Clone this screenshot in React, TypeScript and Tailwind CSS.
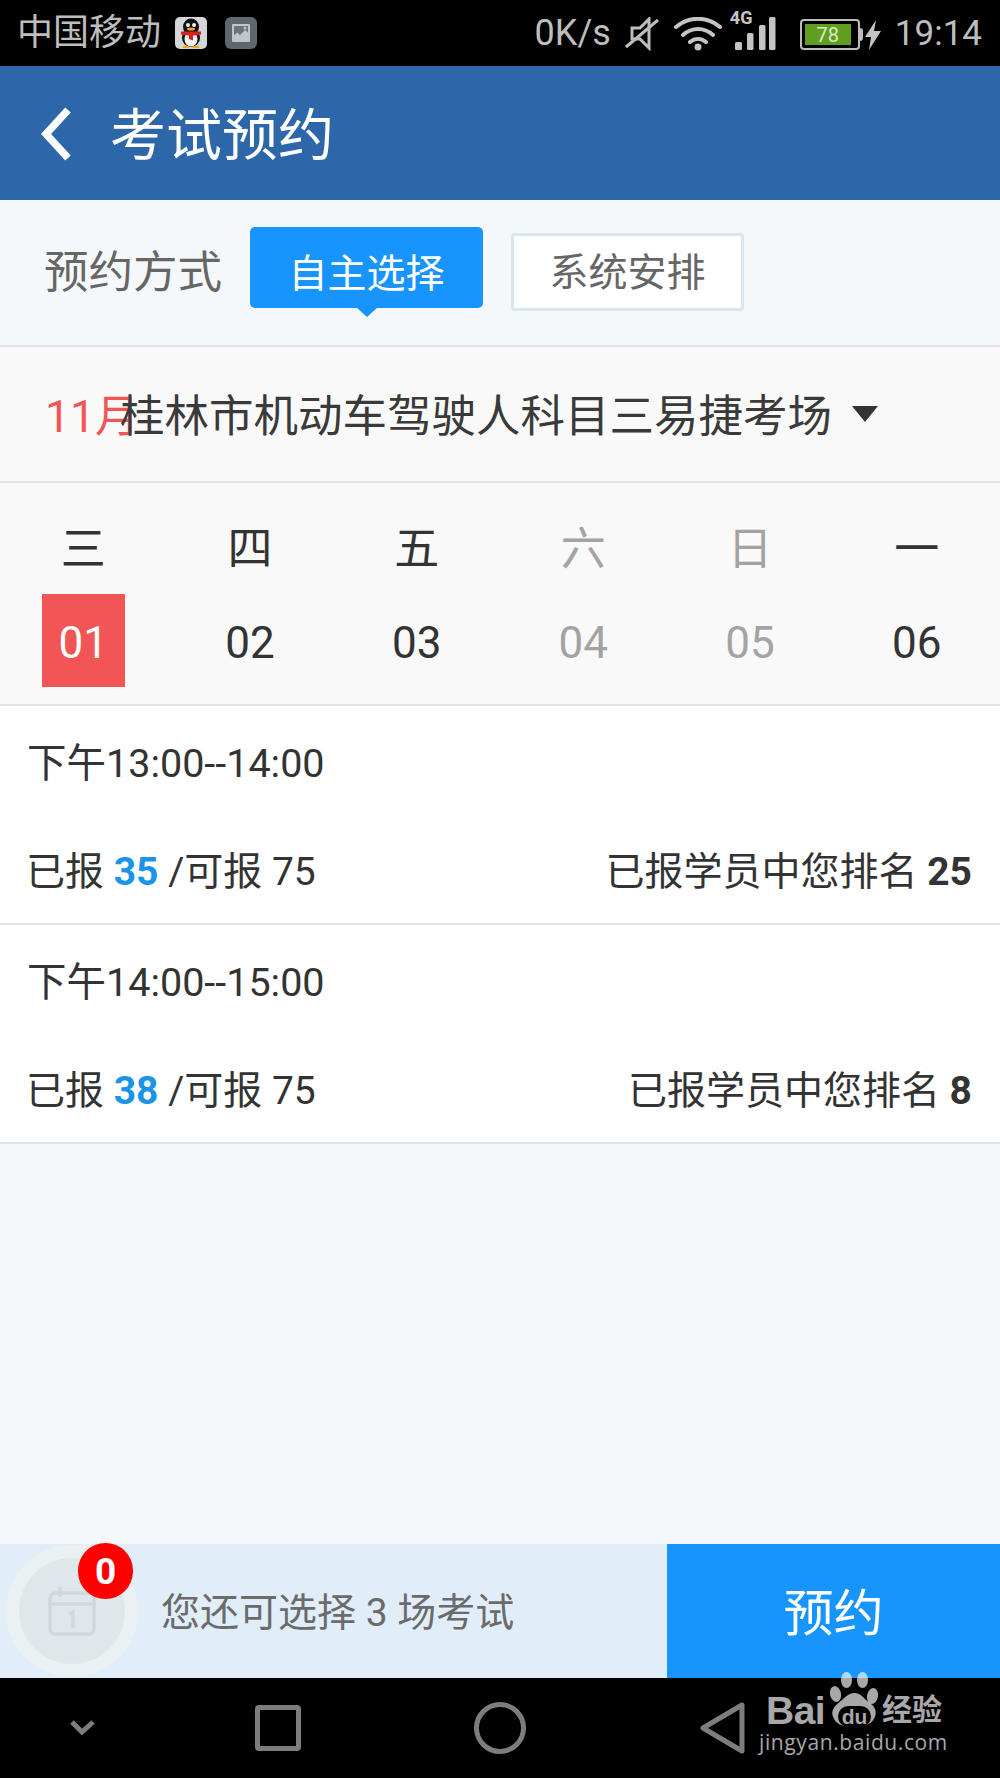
const days = [
  { week: "三", day: "01", active: true },
  { week: "四", day: "02" },
  { week: "五", day: "03" },
  { week: "六", day: "04", off: true },
  { week: "日", day: "05", off: true },
  { week: "一", day: "06" },
];

const slots = [
  { time: "下午13:00--14:00", booked: 35, rank: 25 },
  { time: "下午14:00--15:00", booked: 38, rank: 8 },
];

function QQIcon() {
  return (
    <svg width="32" height="32" viewBox="0 0 32 32">
      <rect width="32" height="32" rx="5" fill="#d6d6d6" />
      <ellipse cx="16" cy="21" rx="9" ry="9" fill="#111" />
      <ellipse cx="16" cy="22" rx="6.5" ry="7.5" fill="#f2f2f2" />
      <ellipse cx="16" cy="10" rx="8" ry="8.5" fill="#111" />
      <circle cx="13" cy="8" r="2" fill="#eee" />
      <circle cx="19" cy="8" r="2" fill="#eee" />
      <ellipse cx="16" cy="12" rx="4" ry="1.6" fill="#f0a818" />
      <path d="M6 14.5h20v3l-8 1v5l-4-1.5v-3.5l-8-1z" fill="#d8201e" />
      <ellipse cx="11" cy="30" rx="3.5" ry="1.2" fill="#f0a818" />
      <ellipse cx="21" cy="30" rx="3.5" ry="1.2" fill="#f0a818" />
    </svg>
  );
}

function PictureIcon() {
  return (
    <svg width="32" height="32" viewBox="0 0 32 32">
      <rect width="32" height="32" rx="6" fill="#5f686f" />
      <rect x="7" y="7" width="18" height="18" rx="1" fill="#c2c5c7" />
      <path d="M9 9h14v6.5L20 13l-5 5-2.5-2.5L9 18z" fill="#6b747a" />
      <circle cx="20" cy="11" r="1.5" fill="#c2c5c7" />
    </svg>
  );
}

function StatusIcons() {
  return (
    <div className="flex items-center">
      <svg width="34" height="34" viewBox="0 0 34 34" className="ml-[14px] mt-[2px]">
        <path d="M7 11h8l9-9v29l-9-9H7z" fill="none" stroke="#bdbdbd" strokeWidth="3" />
        <path d="M1 30 33 3" stroke="#bdbdbd" strokeWidth="3" />
      </svg>
      <svg width="48" height="34" viewBox="0 0 48 34" className="ml-[15px] mt-[1px]">
        <path d="M2 10c13-11 31-11 44 0M9 18c9-8 21-8 30 0M16 25c5-4 11-4 16 0" fill="none" stroke="#c4c4c4" strokeWidth="4" strokeLinecap="round" />
        <circle cx="24" cy="30" r="3.5" fill="#c4c4c4" />
      </svg>
      <div className="relative ml-[8px] mt-[-4px] h-[38px] w-[46px]">
        <span className="absolute left-0 top-[-3px] text-[18px] font-bold leading-[18px] text-[#c4c4c4]">4G</span>
        <svg width="46" height="38" viewBox="0 0 46 38" className="absolute inset-0">
          <rect x="5" y="30" width="7" height="8" rx="1.5" fill="#c4c4c4" />
          <rect x="17" y="21" width="6.5" height="17" rx="1.5" fill="#c4c4c4" />
          <rect x="29" y="13" width="6.5" height="25" rx="1.5" fill="#c4c4c4" />
          <rect x="39" y="5" width="6.5" height="33" rx="1.5" fill="#c4c4c4" />
        </svg>
      </div>
      <div className="ml-[24px] mt-[3px] flex items-center">
        <div className="flex h-[31px] w-[60px] items-center rounded-[4px] border-2 border-[#bdbdbd] p-[3px]">
          <div className="flex h-full w-[46px] items-center justify-center bg-[#5f9e1f] text-[20px] leading-none text-[#dcebc8]">78</div>
        </div>
        <div className="h-[13px] w-[3px] rounded-r-sm bg-[#bdbdbd]" />
      </div>
      <svg width="16" height="30" viewBox="0 0 16 30" className="ml-[2px] mt-[4px]">
        <path d="M11 0 0 17h6L4 30 16 11H9z" fill="#c4c4c4" />
      </svg>
    </div>
  );
}

function BaiduMark() {
  return (
    <div className="absolute left-[765px] top-[1671px] h-[90px] w-[225px] text-[#a8a8a8]">
      <svg width="55" height="57" viewBox="0 0 52 57" className="absolute left-[61px] top-0">
        <g fill="#ffffff" fillOpacity="0.66">
          <ellipse cx="19" cy="9" rx="5.5" ry="8" />
          <ellipse cx="35" cy="9" rx="5.5" ry="8" />
          <ellipse cx="8" cy="23" rx="5.5" ry="8" transform="rotate(-12 8 23)" />
          <ellipse cx="45" cy="25" rx="5.5" ry="8" transform="rotate(10 45 25)" />
          <path d="M27 22c6 0 9 5 14 9 6 4 8 8 7 13-2 8-9 12-21 12s-20-3-22-12c-1-5 2-9 7-13 5-4 9-9 15-9z" />
        </g>
      </svg>
      <span className="absolute left-[1px] top-[18px] text-[39px] font-bold leading-[44px] tracking-[-0.5px] [font-family:'Liberation_Sans',sans-serif]">Bai</span>
      <span className="absolute left-[73px] top-[35px] flex h-[21px] w-[33px] items-center justify-center rounded-full bg-black text-[21px] font-bold leading-none text-[#a8a8a8] [font-family:'Liberation_Sans',sans-serif]">du</span>
      <span className="absolute left-[117px] top-[18px] text-[30px] font-bold leading-[36px] [font-family:'Noto_Sans_CJK_SC',sans-serif]">经验</span>
      <span className="absolute left-[-6px] top-[58px] text-[21px] leading-[26px] tracking-[0.6px] [font-family:'Open_Sans',sans-serif]">jingyan.baidu.com</span>
    </div>
  );
}

export default function App() {
  return (
    <div className="relative flex h-[1778px] w-[1000px] flex-col overflow-hidden bg-[#f4f8fa] [font-family:Roboto,'Noto_Sans_CJK_SC',sans-serif]">
      <div className="flex h-[66px] items-center justify-between bg-black pl-[17px] pr-[18px] text-[#bdbdbd]">
        <div className="flex items-center">
          <span className="text-[36px] leading-none">中国移动</span>
          <span className="ml-[14px] flex"><QQIcon /></span>
          <span className="ml-[18px] flex"><PictureIcon /></span>
        </div>
        <div className="flex items-center">
          <span className="text-[36px] leading-none">0K/s</span>
          <StatusIcons />
          <span className="ml-[14px] text-[35px] leading-none">19:14</span>
        </div>
      </div>

      <header className="flex h-[134px] items-center bg-[#2d67aa] pl-[41px] text-white">
        <svg width="32" height="54" viewBox="0 0 32 54" className="mt-[2px]">
          <path d="M27 3 5 27l22 24" fill="none" stroke="#fff" strokeWidth="7.5" />
        </svg>
        <h1 className="ml-[37px] mt-[6px] text-[56px] font-normal leading-none">考试预约</h1>
      </header>

      <div className="flex h-[147px] items-start border-b-2 border-[#e2e4e4] bg-[#f4f8fa] pl-[44px]">
        <span className="mt-[48px] w-[178px] whitespace-nowrap text-[44.5px] leading-[50px] text-[#666]">预约方式</span>
        <div className="relative ml-[28px] mt-[27px] flex h-[81px] w-[233px] items-center justify-center rounded-[5px] bg-[#1894ff] pt-[13px] text-[39px] text-white">
          自主选择
          <span className="absolute bottom-[-9px] left-1/2 h-0 w-0 -translate-x-1/2 border-x-[11px] border-t-[10px] border-x-transparent border-t-[#1894ff]" />
        </div>
        <div className="ml-[28px] mt-[33px] flex h-[78px] w-[233px] items-center justify-center rounded-[4px] border-[3px] border-[#d8e6f0] bg-white pt-[2px] text-[39px] text-[#666]">
          系统安排
        </div>
      </div>

      <div className="flex h-[136px] items-center border-b-2 border-[#e2e4e4] bg-[#f9f9f9] pl-[45px] pt-[6px]">
        <span className="mr-[-8px] w-[83px] shrink-0 whitespace-nowrap text-[44.5px] text-[#f25555]">11月</span>
        <span className="whitespace-nowrap text-[44.5px] text-[#3a3a3a]">桂林市机动车驾驶人科目三易捷考场</span>
        <span className="ml-[20px] mt-[-6px] h-0 w-0 border-x-[13px] border-t-[16px] border-x-transparent border-t-[#333]" />
      </div>

      <div className="grid h-[223px] grid-cols-6 border-b-2 border-[#e2e4e4] bg-[#f9f9f9]">
        {days.map((d) => (
          <div key={d.day} className="flex flex-col items-center">
            <span className={`mt-[37px] text-[45px] leading-[60px] ${d.off ? "text-[#a3a3a3]" : "text-[#333]"}`}>{d.week}</span>
            <span
              className={`mt-[14px] flex h-[93px] w-[83px] items-center justify-center pt-[4px] text-[44px] ${
                d.active ? "bg-[#f25555] text-white" : d.off ? "text-[#a3a3a3]" : "text-[#333]"
              }`}
            >
              {d.day}
            </span>
          </div>
        ))}
      </div>

      {slots.map((s) => (
        <div key={s.time} className="flex h-[219px] flex-col border-b-2 border-[#e2e4e4] bg-white pl-[26px] pr-[28px] text-[39px] text-[#333]">
          <div className="ml-[1px] mt-[34px] text-[39.5px] leading-[48px]">{s.time}</div>
          <div className="mt-[60px] flex items-center justify-between leading-[48px]">
            <span>
              已报 <b className="font-bold text-[#1a94e8]">{s.booked}</b> /可报 75
            </span>
            <span>
              已报学员中您排名 <b className="font-bold">{s.rank}</b>
            </span>
          </div>
        </div>
      ))}

      <div className="flex-1" />

      <div className="flex h-[134px] bg-[#e1eefa]">
        <div className="flex flex-1 items-center pl-[6px]">
          <div className="relative flex h-[132px] w-[132px] shrink-0 items-center justify-center rounded-full bg-[#ebf0f2]">
            <div className="flex h-[106px] w-[106px] items-center justify-center rounded-full bg-[#e0e7ea]">
              <svg width="50" height="52" viewBox="0 0 50 52" fill="none" stroke="#cfd9dc" strokeWidth="3.5">
                <rect x="3" y="8" width="44" height="41" rx="5" />
                <path d="M3 19h44M13 2v10" />
                <path d="M22 29l4-2v16" />
              </svg>
            </div>
            <span className="absolute left-[72px] top-[-2px] flex h-[56px] w-[55px] items-center justify-center rounded-full bg-[#ff0000] text-[37px] font-bold leading-none text-white">0</span>
          </div>
          <span className="ml-[23px] pt-[5px] text-[39px] text-[#6b6b6b]">您还可选择 3 场考试</span>
        </div>
        <div className="flex w-[333px] items-center justify-center bg-[#1894ff] pt-[6px] text-[50px] text-white">预约</div>
      </div>

      <nav className="flex h-[100px] items-center bg-black">
        <svg width="28" height="20" viewBox="0 0 28 20" className="ml-[69px]">
          <path d="M3 4l10 10L24 4" fill="none" stroke="#7d7d7d" strokeWidth="5" />
        </svg>
        <span className="ml-[158px] h-[46px] w-[46px] rounded-[4px] border-[5px] border-[#7d7d7d]" />
        <span className="ml-[173px] h-[52px] w-[52px] rounded-full border-[5px] border-[#7d7d7d]" />
        <svg width="46" height="52" viewBox="0 0 46 52" className="ml-[174px]">
          <path d="M42 3v46L3 26z" fill="none" stroke="#7d7d7d" strokeWidth="5" strokeLinejoin="round" />
        </svg>
      </nav>

      <BaiduMark />
    </div>
  );
}
